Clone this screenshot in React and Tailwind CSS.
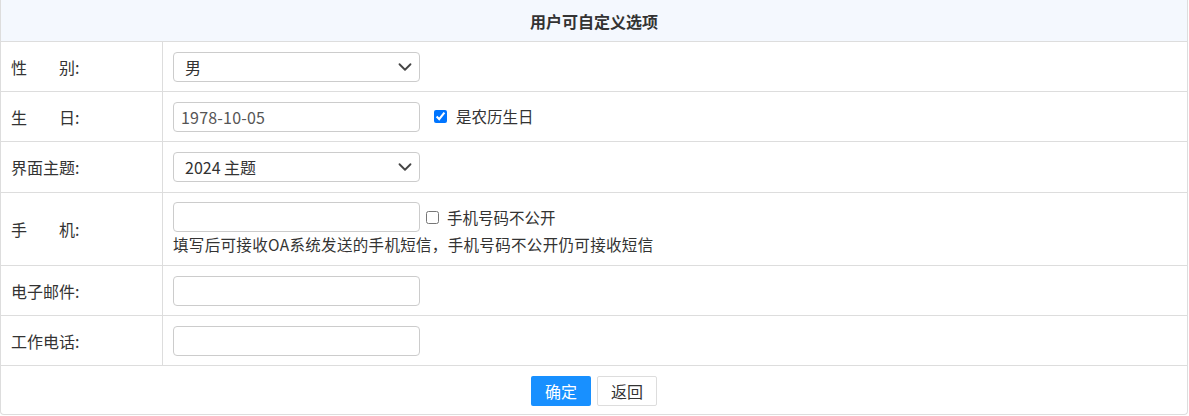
import { ChevronDown } from 'lucide-react';

const font = { fontFamily: '"Noto Sans CJK SC", "Noto Sans", sans-serif' };

function Select({ value }) {
  return (
    <div className="flex h-[30px] w-[247px] items-center justify-between rounded border border-[#ccc] bg-white pl-[11px] pr-[3px] text-[16px] text-[#333]">
      <span>{value}</span>
      <ChevronDown size={22} strokeWidth={2} className="text-[#444]" />
    </div>
  );
}

function Input({ value }) {
  return (
    <div className="flex h-[30px] w-[247px] items-center rounded border border-[#ccc] bg-white px-[7px] text-[16px] tracking-[0.2px] text-[#555]">
      {value}
    </div>
  );
}

function Row({ label, children, h = 'h-[50px]' }) {
  return (
    <div className={`flex border-b border-[#ddd] ${h}`}>
      <div className="flex w-[162px] shrink-0 items-center border-r border-[#ddd] pl-[10px] text-[16px] text-[#333]">
        {label}
      </div>
      <div className="flex flex-1 items-center pl-[10px]">{children}</div>
    </div>
  );
}

export default function App() {
  return (
    <div className="bg-white" style={font}>
      <div className="mr-[1px] h-[415px] overflow-hidden rounded-b border-x border-b border-[#ddd]">
        <div className="flex h-[42px] items-center justify-center border-b border-[#ddd] bg-[#f4f8fe] text-[16px] font-bold text-[#333]">
          用户可自定义选项
        </div>
        <Row label="性　　别:">
          <Select value="男" />
        </Row>
        <Row label="生　　日:">
          <Input value="1978-10-05" />
          <label className="ml-[14px] flex items-center gap-[9px] text-[15.5px] text-[#333]">
            <input type="checkbox" defaultChecked className="h-[13px] w-[13px] accent-[#0075ff]" />
            是农历生日
          </label>
        </Row>
        <Row label="界面主题:" h="h-[51px]">
          <Select value="2024 主题" />
        </Row>
        <Row label="手　　机:" h="h-[73px]">
          <div className="flex flex-col gap-[1px] pt-[1px]">
            <div className="flex items-center">
              <Input value="" />
              <label className="ml-[6px] flex items-center gap-[8px] text-[15.5px] text-[#333]">
                <input type="checkbox" className="h-[13px] w-[13px]" />
                手机号码不公开
              </label>
            </div>
            <div className="text-[15.5px] tracking-[0.33px] text-[#333]">
              填写后可接收OA系统发送的手机短信，手机号码不公开仍可接收短信
            </div>
          </div>
        </Row>
        <Row label="电子邮件:">
          <Input value="" />
        </Row>
        <Row label="工作电话:">
          <Input value="" />
        </Row>
        <div className="flex h-[49px] items-center justify-center gap-[6px]">
          <button className="h-[30px] w-[60px] rounded-[2px] bg-[#1890ff] text-[16px] text-white">确定</button>
          <button className="h-[30px] w-[60px] rounded-[2px] border border-[#ddd] bg-white text-[16px] text-[#333]">返回</button>
        </div>
      </div>
    </div>
  );
}
